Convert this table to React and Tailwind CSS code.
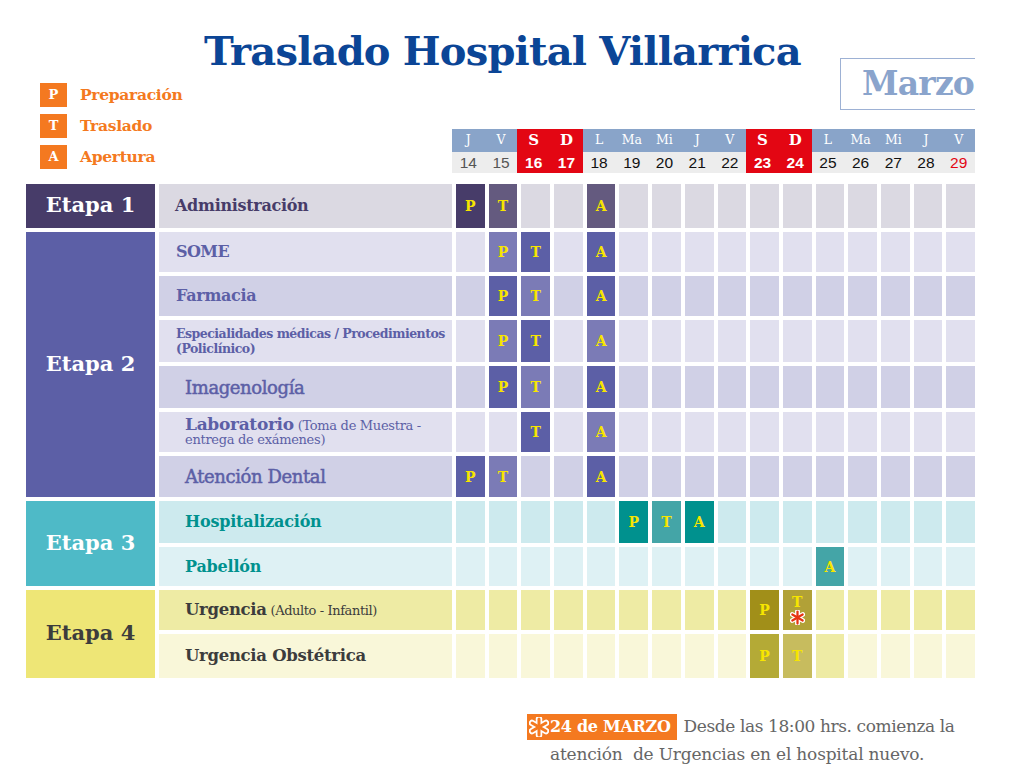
import React from 'react';

const SERIF = "[font-family:'DejaVu_Serif',serif]";

function Asterisk({ size = 16, inner = '#e63312', outer = '#ffffff', className = '' }) {
  const lines = [
    [10, 2, 10, 18],
    [3.1, 6, 16.9, 14],
    [3.1, 14, 16.9, 6],
  ];
  return (
    <svg width={size} height={size} viewBox="0 0 20 20" className={className}>
      {lines.map((l, i) => (
        <line key={'o' + i} x1={l[0]} y1={l[1]} x2={l[2]} y2={l[3]} stroke={outer} strokeWidth="6.5" strokeLinecap="round" />
      ))}
      {lines.map((l, i) => (
        <line key={'i' + i} x1={l[0]} y1={l[1]} x2={l[2]} y2={l[3]} stroke={inner} strokeWidth="3" strokeLinecap="round" />
      ))}
    </svg>
  );
}

const days = ['J', 'V', 'S', 'D', 'L', 'Ma', 'Mi', 'J', 'V', 'S', 'D', 'L', 'Ma', 'Mi', 'J', 'V'];
const nums = [14, 15, 16, 17, 18, 19, 20, 21, 22, 23, 24, 25, 26, 27, 28, 29];
const redCols = [2, 3, 9, 10];

const etapas = [
  {
    label: 'Etapa 1',
    labelCls: 'bg-[#473c69] text-white',
    rows: [
      {
        h: 'h-[44px]',
        bg: 'bg-[#dbd9e2]',
        name: <span className="pl-[16px] text-[16px] font-bold text-[#473c69] tracking-[-0.3px]">Administración</span>,
        cells: { 0: ['P', 'bg-[#473c69]'], 1: ['T', 'bg-[#645a7f]'], 4: ['A', 'bg-[#645a7f]'] },
      },
    ],
  },
  {
    label: 'Etapa 2',
    labelCls: 'bg-[#5c5fa6] text-white',
    rows: [
      {
        h: 'h-[40px]',
        bg: 'bg-[#e1e0ef]',
        name: <span className="pl-[17px] text-[16px] font-bold text-[#5c5fa6] tracking-[-0.6px]">SOME</span>,
        cells: { 1: ['P', 'bg-[#7b7bb6]'], 2: ['T', 'bg-[#5c5fa6]'], 4: ['A', 'bg-[#5c5fa6]'] },
      },
      {
        h: 'h-[40px]',
        bg: 'bg-[#d0d0e6]',
        name: <span className="pl-[17px] text-[16px] font-bold text-[#5c5fa6] tracking-[-0.3px]">Farmacia</span>,
        cells: { 1: ['P', 'bg-[#5c5fa6]'], 2: ['T', 'bg-[#7b7bb6]'], 4: ['A', 'bg-[#5c5fa6]'] },
      },
      {
        h: 'h-[42px]',
        bg: 'bg-[#e1e0ef]',
        name: (
          <span className="pl-[17px] text-[12.5px] leading-[15px] font-bold text-[#5c5fa6] tracking-[-0.5px]">
            Especialidades médicas / Procedimientos
            <br />
            (Policlínico)
          </span>
        ),
        cells: { 1: ['P', 'bg-[#7b7bb6]'], 2: ['T', 'bg-[#5c5fa6]'], 4: ['A', 'bg-[#7b7bb6]'] },
      },
      {
        h: 'h-[42px]',
        bg: 'bg-[#d0d0e6]',
        name: (
          <span className="pl-[26px] text-[18px] text-[#5c5fa6] tracking-[-0.4px] [-webkit-text-stroke:0.5px_#5c5fa6]">
            Imagenología
          </span>
        ),
        cells: { 1: ['P', 'bg-[#5c5fa6]'], 2: ['T', 'bg-[#7b7bb6]'], 4: ['A', 'bg-[#5c5fa6]'] },
      },
      {
        h: 'h-[40px]',
        bg: 'bg-[#e1e0ef]',
        name: (
          <span className="pl-[26px] text-[13px] leading-[14px] text-[#5c5fa6] tracking-[-0.3px]">
            <span className="text-[17px] font-bold">Laboratorio</span> (Toma de Muestra -
            <br />
            entrega de exámenes)
          </span>
        ),
        cells: { 2: ['T', 'bg-[#5c5fa6]'], 4: ['A', 'bg-[#7b7bb6]'] },
      },
      {
        h: 'h-[41px]',
        bg: 'bg-[#d0d0e6]',
        name: (
          <span className="pl-[26px] text-[18px] text-[#5c5fa6] tracking-[-0.4px] [-webkit-text-stroke:0.5px_#5c5fa6]">
            Atención Dental
          </span>
        ),
        cells: { 0: ['P', 'bg-[#5c5fa6]'], 1: ['T', 'bg-[#7b7bb6]'], 4: ['A', 'bg-[#5c5fa6]'] },
      },
    ],
  },
  {
    label: 'Etapa 3',
    labelCls: 'bg-[#4ebac7] text-white',
    rows: [
      {
        h: 'h-[42px]',
        bg: 'bg-[#cdeaee]',
        name: <span className="pl-[26px] text-[16px] font-bold text-[#00918e] tracking-[-0.2px]">Hospitalización</span>,
        cells: { 5: ['P', 'bg-[#00918e]'], 6: ['T', 'bg-[#44a5a7]'], 7: ['A', 'bg-[#00918e]'] },
      },
      {
        h: 'h-[39px]',
        bg: 'bg-[#def1f4]',
        name: <span className="pl-[26px] text-[16px] font-bold text-[#00918e] tracking-[-0.2px]">Pabellón</span>,
        cells: { 11: ['A', 'bg-[#44a5a7]'] },
      },
    ],
  },
  {
    label: 'Etapa 4',
    labelCls: 'bg-[#eee676] text-[#3c3c3c]',
    rows: [
      {
        h: 'h-[40px]',
        bg: 'bg-[#eeeba4]',
        name: (
          <span className="pl-[26px] text-[13px] text-[#3c3c3c] tracking-[-0.4px]">
            <span className="text-[16.5px] font-bold tracking-[-0.3px]">Urgencia</span> (Adulto - Infantil)
          </span>
        ),
        cells: { 9: ['P', 'bg-[#a18f19]'], 10: ['T*', 'bg-[#b1a137]'] },
      },
      {
        h: 'h-[44px]',
        bg: 'bg-[#f9f7d9]',
        name: <span className="pl-[26px] text-[16.5px] font-bold text-[#3c3c3c] tracking-[-0.3px]">Urgencia Obstétrica</span>,
        cells: { 9: ['P', 'bg-[#b4aa36]'], 10: ['T', 'bg-[#c7bc5e]'], 11: ['', 'bg-[#eeeba4]'] },
      },
    ],
  },
];

function Cell({ data, rowBg }) {
  if (!data) return <div className={rowBg} />;
  const [letter, bg] = data;
  const star = letter === 'T*';
  return (
    <div className={`${bg} flex flex-col items-center justify-center`}>
      {letter && (
        <span className={`${SERIF} text-[14px] font-bold leading-none text-[#f7e500]`}>{star ? 'T' : letter}</span>
      )}
      {star && <Asterisk size={15} className="mt-[1px]" />}
    </div>
  );
}

export default function App() {
  return (
    <div className={`w-[1024px] h-[776px] bg-white overflow-hidden ${SERIF}`}>
      {/* Top area */}
      <div className="h-[184px] flex flex-col">
        <div className="h-[58px] pt-[31px] pl-[204px]">
          <h1 className="text-[40px] leading-none font-bold text-[#0b4596] tracking-[-0.8px] whitespace-nowrap">
            Traslado Hospital Villarrica
          </h1>
        </div>
        <div className="flex flex-1">
          <div className="pl-[40px] pt-[25px] flex flex-col gap-[7px]">
            {[
              ['P', 'Preparación'],
              ['T', 'Traslado'],
              ['A', 'Apertura'],
            ].map(([l, t]) => (
              <div key={l} className="flex items-center h-[24px]">
                <div className="w-[27px] h-[24px] bg-[#f47920] flex items-center justify-center text-white text-[13px] font-bold">
                  {l}
                </div>
                <span className="ml-[13px] text-[15.5px] font-bold text-[#f47920] tracking-[-0.3px]">{t}</span>
              </div>
            ))}
          </div>
          <div className="ml-auto mr-[49px] w-[523px] flex flex-col">
            <div className="self-end w-[135px] h-[52px] border-[1.5px] border-r-0 border-[#9db1d4] flex items-center pl-[21px] overflow-hidden">
              <span className="text-[33px] font-bold text-[#8aa4cc] tracking-[-0.8px] whitespace-nowrap">Marzo</span>
            </div>
            <div className="mt-[19px] grid grid-cols-16">
              {days.map((d, i) => (
                <div
                  key={'d' + i}
                  className={`h-[23px] flex items-center justify-center ${
                    redCols.includes(i) ? 'bg-[#e30613] text-white text-[15px] font-bold' : 'bg-[#89a4c9] text-white text-[12.5px]'
                  }`}
                >
                  {d}
                </div>
              ))}
              {nums.map((n, i) => (
                <div
                  key={'n' + i}
                  className={`h-[21px] flex items-center justify-center [font-family:'Liberation_Sans',sans-serif] text-[15.5px] ${
                    redCols.includes(i)
                      ? 'bg-[#e30613] text-white font-bold'
                      : i < 2
                      ? 'bg-[#ededed] text-[#555555]'
                      : i === 15
                      ? 'bg-[#ededed] text-[#e30613]'
                      : 'bg-[#ededed] text-[#111111]'
                  }`}
                >
                  {n}
                </div>
              ))}
            </div>
          </div>
        </div>
      </div>

      {/* Grid */}
      <div className="pl-[26px] flex flex-col gap-[4px]">
        {etapas.map((et) => (
          <div key={et.label} className="flex gap-[4px]">
            <div className={`w-[129px] flex items-center justify-center text-[21px] font-bold ${et.labelCls}`}>
              <span className="-mt-[2px]">{et.label}</span>
            </div>
            <div className="flex flex-col gap-[4px]">
              {et.rows.map((r, ri) => (
                <div key={ri} className={`flex gap-[4px] ${r.h}`}>
                  <div className={`w-[293px] flex items-center ${r.bg}`}>{r.name}</div>
                  <div className="w-[519px] grid grid-cols-16 gap-[4px]">
                    {Array.from({ length: 16 }).map((_, ci) => (
                      <Cell key={ci} data={r.cells[ci]} rowBg={r.bg} />
                    ))}
                  </div>
                </div>
              ))}
            </div>
          </div>
        ))}
      </div>

      {/* Footer note */}
      <div className="mt-[36px] pl-[527px] text-[17px] text-[#666666] tracking-[-0.2px]">
        <div className="flex items-center h-[26px]">
          <div className="h-[26px] bg-[#f47920] flex items-center pl-[2px] pr-[6px]">
            <Asterisk size={20} inner="#f47920" outer="#ffffff" />
            <span className="ml-[1px] text-white font-bold text-[16px] tracking-[-0.3px]">24 de MARZO</span>
          </div>
          <span className="ml-[7px] whitespace-nowrap tracking-[-0.4px]">Desde las 18:00 hrs. comienza la</span>
        </div>
        <div className="pl-[23px] mt-[2px] whitespace-pre">atención  de Urgencias en el hospital nuevo.</div>
      </div>
    </div>
  );
}
